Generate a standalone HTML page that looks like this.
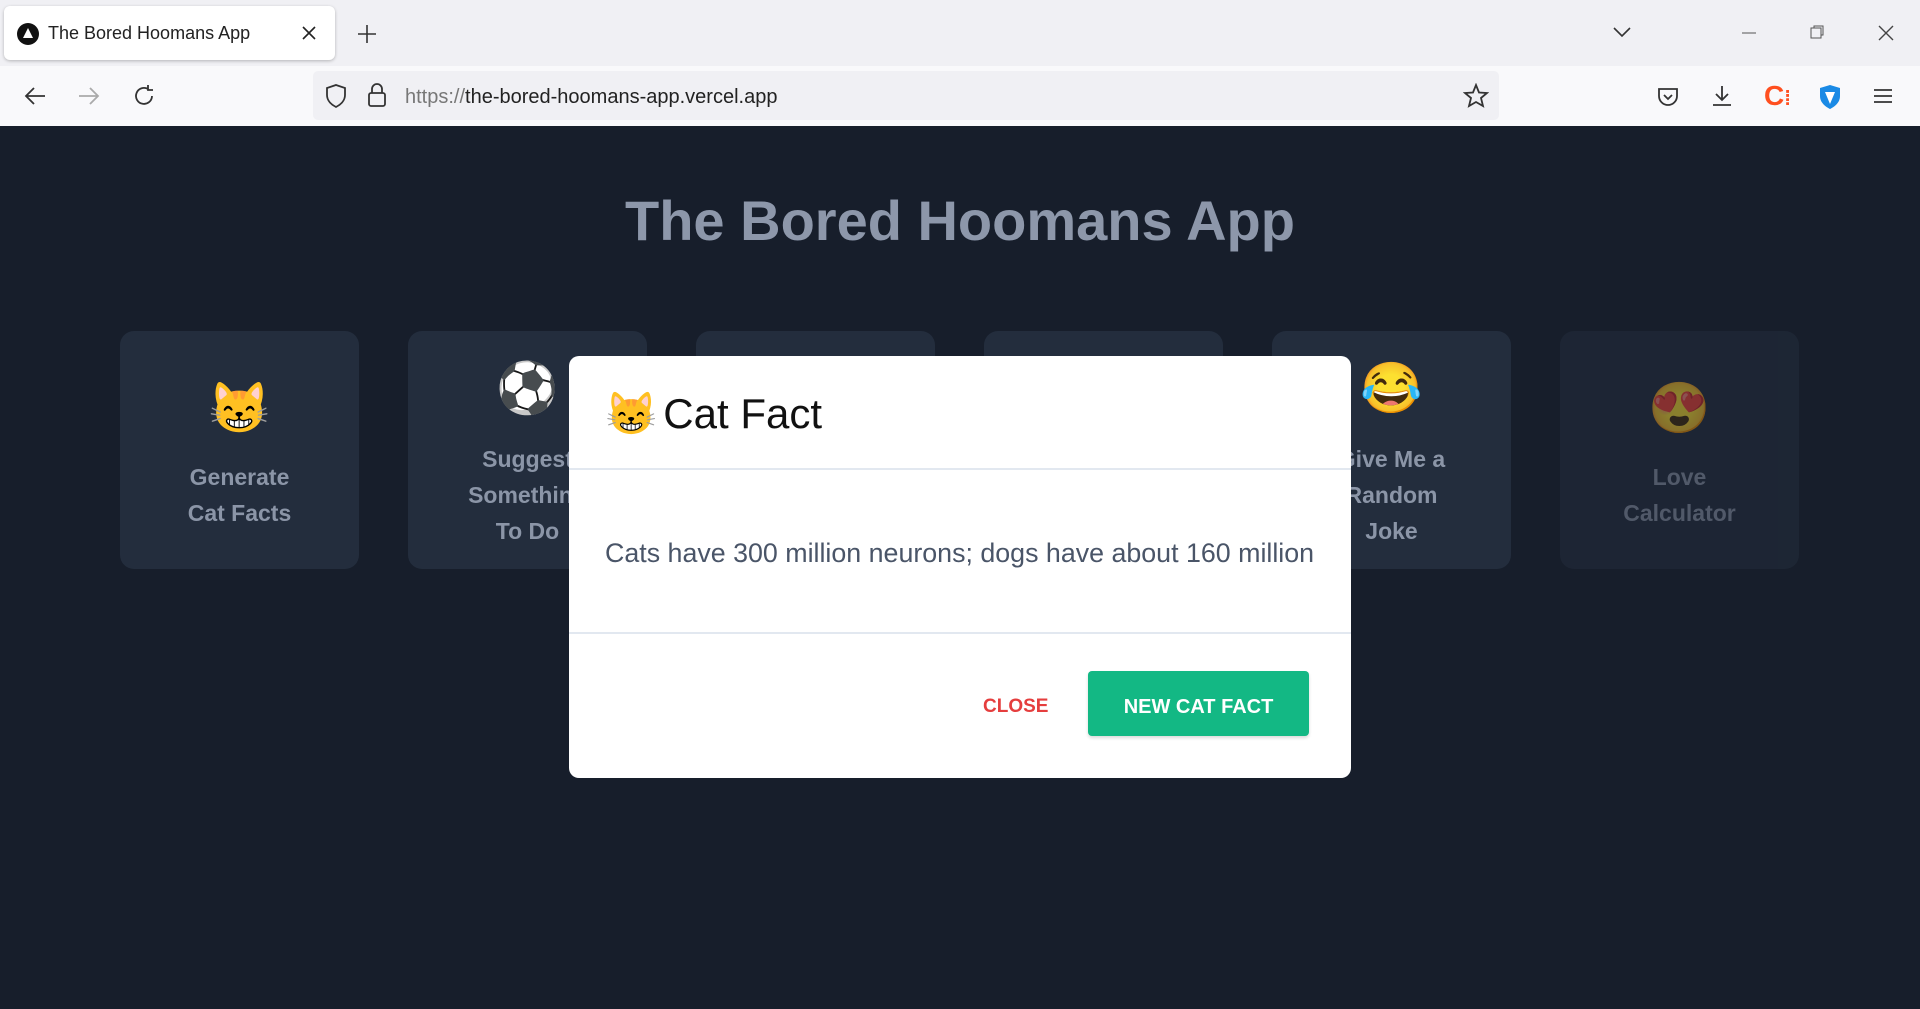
<!DOCTYPE html>
<html><head><meta charset="utf-8"><style>
*{box-sizing:border-box;margin:0;padding:0}
body{width:1920px;height:1009px;overflow:hidden;font-family:"Liberation Sans",sans-serif;background:#171e2b;position:relative}
.tabbar{position:absolute;left:0;top:0;width:1920px;height:66px;background:#f0f0f4}
.tab{position:absolute;left:4px;top:6px;width:331px;height:54px;background:#fff;border-radius:6px;box-shadow:0 1px 3px rgba(0,0,0,.25)}
.toolbar{position:absolute;left:0;top:66px;width:1920px;height:60px;background:#f9f9fb}
.url{position:absolute;left:313px;top:5px;width:1186px;height:49px;background:#f0f0f4;border-radius:5px}
.ic{position:absolute}
.page{position:absolute;left:0;top:126px;width:1920px;height:883px;background:#171e2b}
h1{position:absolute;top:62px;width:1920px;text-align:center;font-size:56px;font-weight:bold;color:#8d97aa}
.card{position:absolute;top:205px;width:239px;height:238px;background:#232d3d;border-radius:14px;color:#8b95a7;font-weight:bold;font-size:23px;text-align:center;line-height:36px}
.card .e{font-size:50px;line-height:60px;display:block}
.modal{position:absolute;left:569px;top:356px;width:782px;height:422px;background:#fff;border-radius:10px}
.mh{border-bottom:2px solid #e2e8f0;padding:4px 0 0 36px;font-size:42px;color:#111;display:flex;align-items:center;height:114px}
.mb{height:164px;border-bottom:2px solid #e2e8f0;padding:68px 0 0 36px;font-size:26.8px;color:#4a5568}
.close{position:absolute;left:414px;top:340px;font-size:19px;font-weight:bold;color:#e53e3e}
.btn{position:absolute;left:519px;top:315px;width:221px;height:65px;background:#13b884;border-radius:4px;color:#fff;font-weight:bold;font-size:20px;text-align:center;line-height:65px;padding-top:4px;box-shadow:0 2px 3px rgba(0,0,0,.15)}
</style></head><body>
<div class="tabbar">
 <div class="tab">
  <svg class="ic" style="left:12px;top:16px" width="24" height="24"><circle cx="12" cy="12" r="11" fill="#111"/><path d="M12 6 L17 16 H7Z" fill="#fff"/></svg>
  <div style="position:absolute;left:44px;top:17px;font-size:18px;color:#222">The Bored Hoomans App</div>
  <svg class="ic" style="left:298px;top:20px" width="14" height="14"><path d="M1 1L13 13M13 1L1 13" stroke="#222" stroke-width="1.6"/></svg>
 </div>
 <svg class="ic" style="left:357px;top:24px" width="20" height="20"><path d="M10 1V19M1 10H19" stroke="#333" stroke-width="1.6"/></svg>
 <svg class="ic" style="left:1612px;top:26px" width="20" height="12"><path d="M2 2L10 10L18 2" stroke="#333" stroke-width="1.6" fill="none"/></svg>
 <svg class="ic" style="left:1742px;top:32px" width="14" height="2"><path d="M0 1H14" stroke="#555"/></svg>
 <svg class="ic" style="left:1810px;top:25px" width="14" height="14"><rect x="1" y="3" width="10" height="10" stroke="#555" fill="none"/><path d="M4 3V1H13V10H11" stroke="#555" fill="none"/></svg>
 <svg class="ic" style="left:1878px;top:25px" width="16" height="16"><path d="M1 1L15 15M15 1L1 15" stroke="#444" stroke-width="1.4"/></svg>
</div>
<div class="toolbar">
 <svg class="ic" style="left:24px;top:20px" width="22" height="20"><path d="M21 10H3M10 2L2 10L10 18" stroke="#333" stroke-width="1.8" fill="none"/></svg>
 <svg class="ic" style="left:78px;top:20px" width="22" height="20"><path d="M1 10H19M12 2L20 10L12 18" stroke="#aaa" stroke-width="1.8" fill="none"/></svg>
 <svg class="ic" style="left:132px;top:18px" width="24" height="24"><path d="M20 12A8 8 0 1 1 16 5M16 1V6H21" stroke="#333" stroke-width="1.8" fill="none"/></svg>
 <div class="url">
  <svg class="ic" style="left:12px;top:12px" width="22" height="26"><path d="M11 2L20 5V12C20 18 15 22 11 24C7 22 2 18 2 12V5Z" stroke="#333" stroke-width="1.8" fill="none"/></svg>
  <svg class="ic" style="left:54px;top:11px" width="20" height="26"><rect x="2" y="11" width="16" height="13" rx="2" stroke="#333" stroke-width="1.8" fill="none"/><path d="M5 11V7A5 5 0 0 1 15 7V11" stroke="#333" stroke-width="1.8" fill="none"/></svg>
  <div style="position:absolute;left:92px;top:15px;font-size:20px;color:#222"><span style="color:#777">https://</span>the-bored-hoomans-app.vercel.app</div>
  <svg class="ic" style="left:1150px;top:12px" width="26" height="25"><path d="M13 2L16 9.5L24 10L18 15L20 23L13 19L6 23L8 15L2 10L10 9.5Z" stroke="#333" stroke-width="1.8" fill="none"/></svg>
 </div>
 <svg class="ic" style="left:1656px;top:20px" width="24" height="22"><path d="M3 3H21V10A9 9 0 0 1 3 10Z" stroke="#333" stroke-width="1.8" fill="none"/><path d="M8 9L12 13L16 9" stroke="#333" stroke-width="1.8" fill="none"/></svg>
 <svg class="ic" style="left:1710px;top:18px" width="24" height="24"><path d="M12 2V16M6 10L12 16L18 10M3 21H21" stroke="#333" stroke-width="1.8" fill="none"/></svg>
 <div style="position:absolute;left:1764px;top:14px;font-size:28px;font-weight:bold;color:#ff4f1f">C<span style="font-size:20px">⁞</span></div>
 <svg class="ic" style="left:1818px;top:18px" width="24" height="26"><path d="M12 1L22 4V12C22 19 16 23 12 25C8 23 2 19 2 12V4Z" fill="#1a8ae5"/><path d="M7 8H17L12 20Z" fill="#fff"/></svg>
 <svg class="ic" style="left:1873px;top:22px" width="20" height="16"><path d="M1 2H19M1 8H19M1 14H19" stroke="#333" stroke-width="1.8"/></svg>
</div>
<div class="page">
 <h1>The Bored Hoomans App</h1>
 <div class="card" style="left:120px"><span class="e" style="margin-top:47px">😸</span><div style="margin-top:21px">Generate<br>Cat Facts</div></div>
 <div class="card" style="left:408px"><span class="e" style="margin-top:27px">⚽</span><div style="margin-top:23px">Suggest<br>Something<br>To Do</div></div>
 <div class="card" style="left:696px"></div>
 <div class="card" style="left:984px"></div>
 <div class="card" style="left:1272px"><span class="e" style="margin-top:27px">😂</span><div style="margin-top:23px">Give Me a<br>Random<br>Joke</div></div>
 <div class="card" style="left:1560px;opacity:.5"><span class="e" style="margin-top:47px">😍</span><div style="margin-top:21px">Love<br>Calculator</div></div>
</div>
<div class="modal">
 <div class="mh"><span style="font-size:42px;margin-right:6px">😸</span>Cat Fact</div>
 <div class="mb">Cats have 300 million neurons; dogs have about 160 million</div>
 <div class="close">CLOSE</div>
 <div class="btn">NEW CAT FACT</div>
</div>
</body></html>
